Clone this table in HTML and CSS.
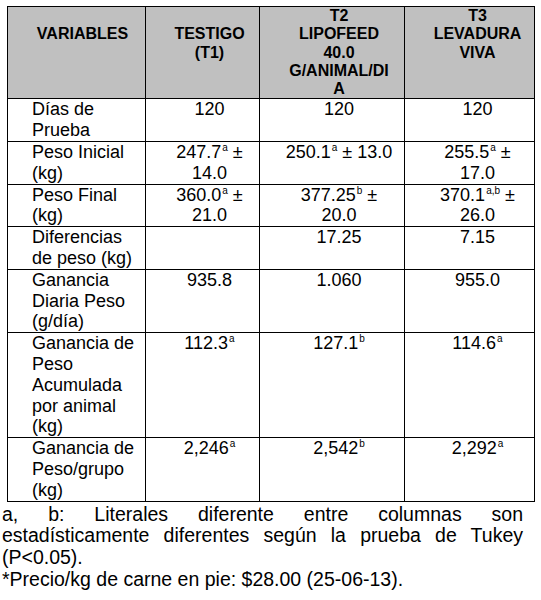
FILE: index.html
```html
<!DOCTYPE html>
<html lang="es">
<head>
<meta charset="utf-8">
<title>Tabla</title>
<link rel="stylesheet" href="styles.css">
</head>
<body>
<table class="data">
  <colgroup>
    <col class="c1"><col class="c2"><col class="c3"><col class="c4">
  </colgroup>
  <thead>
    <tr>
      <th class="var low">VARIABLES</th>
      <th class="t1 low">TESTIGO<br>(T1)</th>
      <th class="t2">T2<br>LIPOFEED<br>40.0<br>G/ANIMAL/DI<br>A</th>
      <th class="t3">T3<br>LEVADURA<br>VIVA</th>
    </tr>
  </thead>
  <tbody>
    <tr>
      <td class="var">Días de Prueba</td>
      <td class="t1">120</td>
      <td class="t2">120</td>
      <td class="t3">120</td>
    </tr>
    <tr>
      <td class="var">Peso Inicial (kg)</td>
      <td class="t1">247.7<sup>a</sup> ± 14.0</td>
      <td class="t2">250.1<sup>a</sup> ± 13.0</td>
      <td class="t3">255.5<sup>a</sup> ± 17.0</td>
    </tr>
    <tr>
      <td class="var">Peso Final (kg)</td>
      <td class="t1">360.0<sup>a</sup> ± 21.0</td>
      <td class="t2">377.25<sup>b</sup> ± 20.0</td>
      <td class="t3">370.1<sup>a,b</sup> ± 26.0</td>
    </tr>
    <tr>
      <td class="var">Diferencias de peso (kg)</td>
      <td class="t1"></td>
      <td class="t2">17.25</td>
      <td class="t3">7.15</td>
    </tr>
    <tr>
      <td class="var">Ganancia Diaria Peso (g/día)</td>
      <td class="t1">935.8</td>
      <td class="t2">1.060</td>
      <td class="t3">955.0</td>
    </tr>
    <tr>
      <td class="var">Ganancia de Peso Acumulada por animal (kg)</td>
      <td class="t1">112.3<sup>a</sup></td>
      <td class="t2">127.1<sup>b</sup></td>
      <td class="t3">114.6<sup>a</sup></td>
    </tr>
    <tr>
      <td class="var">Ganancia de Peso/grupo (kg)</td>
      <td class="t1">2,246<sup>a</sup></td>
      <td class="t2">2,542<sup>b</sup></td>
      <td class="t3">2,292<sup>a</sup></td>
    </tr>
  </tbody>
</table>
<p class="note">a, b: Literales diferente entre columnas son estadísticamente diferentes según la prueba de Tukey (P&lt;0.05).</p>
<p class="price">*Precio/kg de carne en pie: $28.00 (25-06-13).</p>
</body>
</html>
```

FILE: styles.css
```css
html, body {
  margin: 0;
  padding: 0;
  background: #ffffff;
}

body {
  font-family: "Liberation Sans", Arial, sans-serif;
  color: #000000;
}

.data {
  border-collapse: collapse;
  table-layout: fixed;
  width: 527px;
  margin: 6px 0 0 7px;
}

.c1 { width: 138px; }
.c2 { width: 114px; }
.c3 { width: 145px; }
.c4 { width: 130px; }

.data th,
.data td {
  border: 1px solid #000000;
  vertical-align: top;
  padding: 0;
}

.data th {
  background: #c0c0c0;
  font-size: 16px;
  font-weight: bold;
  line-height: 18.3px;
  text-align: center;
}

.data th.low {
  padding-top: 18.3px;
}

.data td {
  font-size: 18px;
  line-height: 20.8px;
  text-align: center;
}

.data td.var {
  text-align: left;
}

.data .var { padding-left: 24px; padding-right: 5px; }
.data .t1 { padding-left: 18px; padding-right: 4px; }
.data .t2 { padding-left: 23px; padding-right: 9px; }
.data .t3 { padding-left: 20px; padding-right: 4px; }

.data th.var { padding-left: 12px; padding-right: 0; }

.data sup {
  font-size: 10px;
  line-height: 0;
  vertical-align: 7px;
  margin-left: 1px;
}

.note,
.price {
  margin: 0 0 0 2px;
  width: 521px;
  font-size: 19.5px;
  line-height: 21.7px;
}

.note {
  margin-top: 2px;
  text-align: justify;
}
```
